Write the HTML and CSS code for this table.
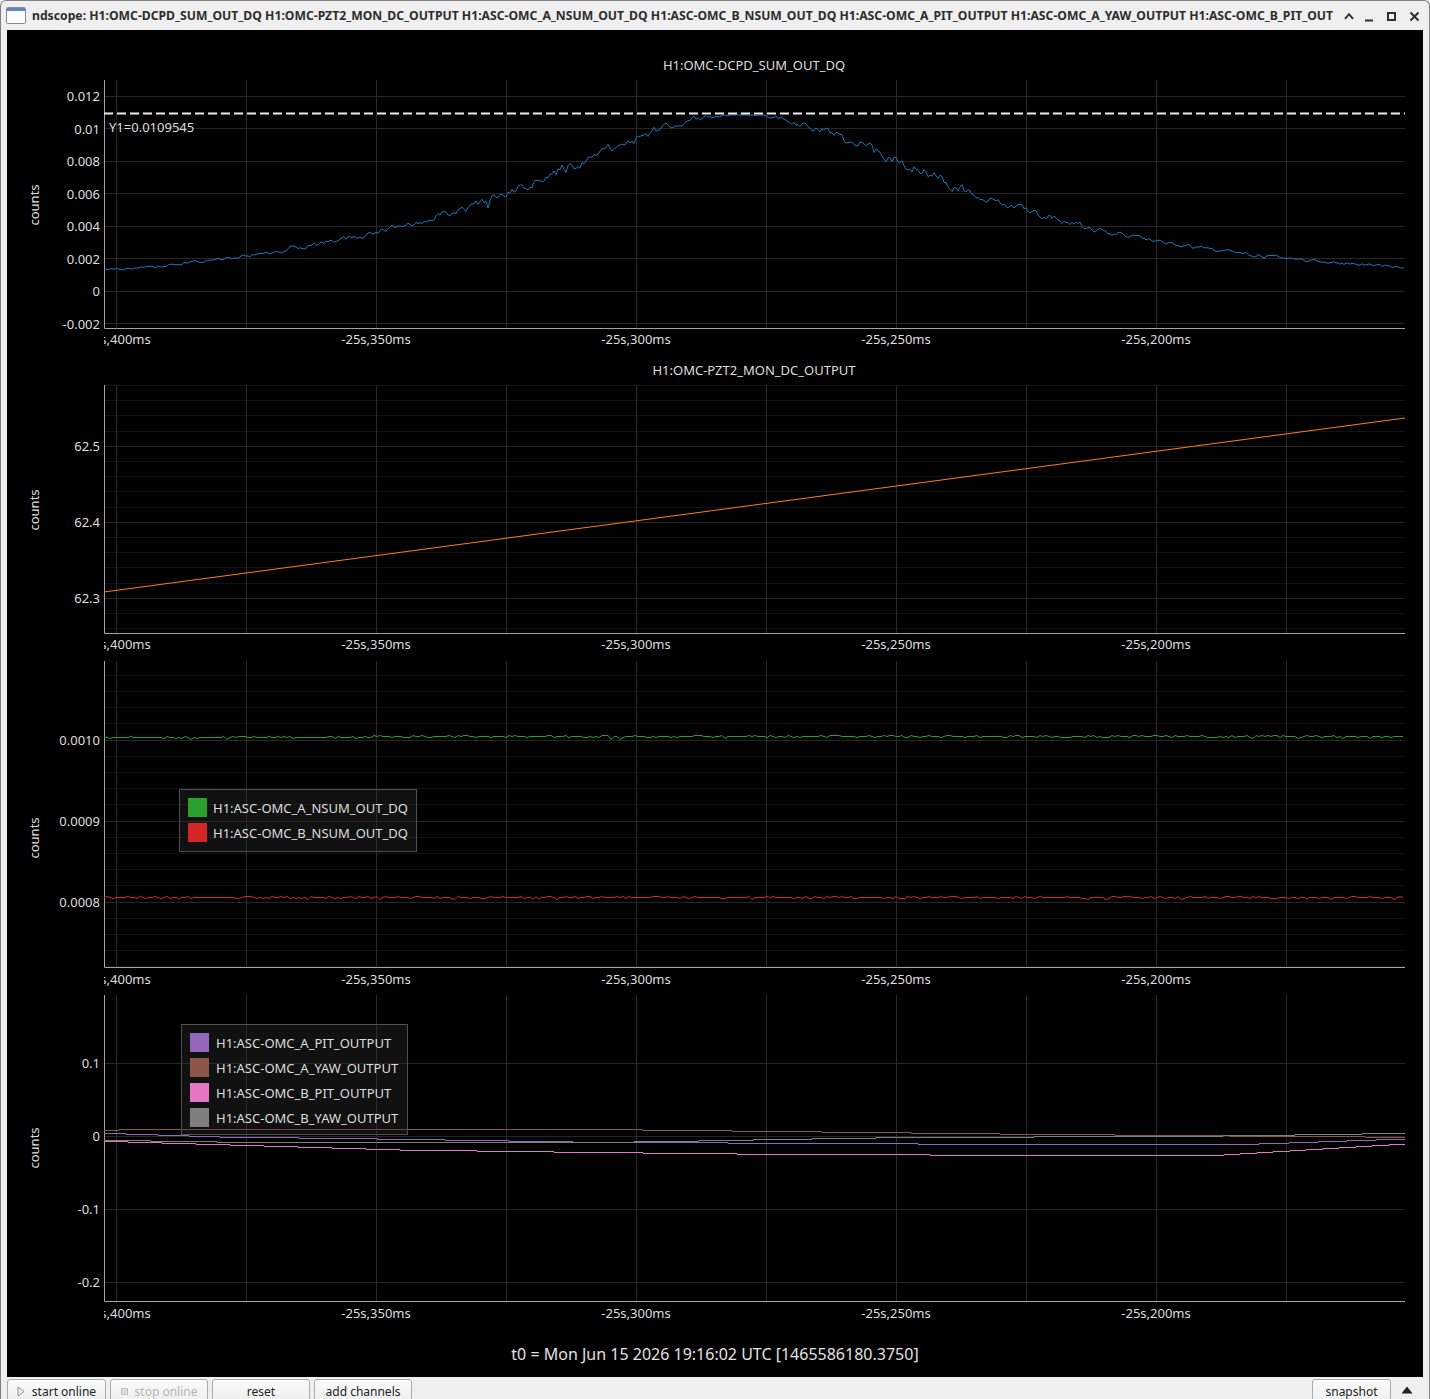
FILE: index.html
```html
<!DOCTYPE html>
<html lang="en">
<head>
<meta charset="utf-8">
<title>ndscope</title>
<link rel="stylesheet" href="styles.css">
</head>
<body>
<div class="window">
  <header class="titlebar">
    <svg class="app-icon" viewBox="0 0 20 17"><rect x="0.5" y="0.5" width="19" height="16" rx="1" class="ai-body"/><rect x="1" y="1" width="18" height="3" class="ai-bar"/></svg>
    <div class="title">ndscope: H1:OMC-DCPD_SUM_OUT_DQ H1:OMC-PZT2_MON_DC_OUTPUT H1:ASC-OMC_A_NSUM_OUT_DQ H1:ASC-OMC_B_NSUM_OUT_DQ H1:ASC-OMC_A_PIT_OUTPUT H1:ASC-OMC_A_YAW_OUTPUT H1:ASC-OMC_B_PIT_OUTPUT H1:ASC-OMC_B_YAW_OUTPUT</div>
    <div class="controls">
      <svg viewBox="0 0 22 22"><path d="M8 13.8 L12 9.2 L16 13.8" class="ctl"/></svg>
      <svg viewBox="0 0 22 22"><path d="M6 15.5 H14" class="ctl"/></svg>
      <svg viewBox="0 0 22 22"><rect x="7" y="8" width="7" height="7" class="ctl"/></svg>
      <svg viewBox="0 0 22 22"><path d="M7.5 7.5 L15.5 15.5 M15.5 7.5 L7.5 15.5" class="ctl"/></svg>
    </div>
  </header>

  <div class="frame">
    <main class="scope">
      <!-- plot 1 -->
      <svg class="plot p1" viewBox="7 30 1416 325">
        <defs><clipPath id="cx1"><rect x="104" y="0" width="1320" height="1400"/></clipPath></defs>
        <g id="g1"></g>
        <path class="axis" d="M104.5 80 V328.5 H1405"/>
        <g id="d1"></g>
        <line class="cursor" x1="104" x2="1405" y1="113.5" y2="113.5"/>
        <text class="ptitle" x="754" y="69.5">H1:OMC-DCPD_SUM_OUT_DQ</text>
        <text class="ylab" transform="translate(39 205) rotate(-90)">counts</text>
        <text class="ty" x="100" y="101">0.012</text>
        <text class="ty" x="100" y="133.5">0.01</text>
        <text class="ty" x="100" y="166">0.008</text>
        <text class="ty" x="100" y="198.5">0.006</text>
        <text class="ty" x="100" y="231">0.004</text>
        <text class="ty" x="100" y="263.5">0.002</text>
        <text class="ty" x="100" y="296">0</text>
        <text class="ty" x="100" y="328.5">-0.002</text>
        <text class="tx" x="116" y="344" clip-path="url(#cx1)">-25s,400ms</text>
        <text class="tx" x="376" y="344">-25s,350ms</text>
        <text class="tx" x="636" y="344">-25s,300ms</text>
        <text class="tx" x="896" y="344">-25s,250ms</text>
        <text class="tx" x="1156" y="344">-25s,200ms</text>
        <text class="cursor-label" x="109" y="132">Y1=0.0109545</text>
      </svg>

      <!-- plot 2 -->
      <svg class="plot p2" viewBox="7 355 1416 300">
        <defs><clipPath id="cx2"><rect x="104" y="0" width="1320" height="1400"/></clipPath></defs>
        <g id="g2"></g>
        <path class="axis" d="M104.5 385 V633.5 H1405"/>
        <g id="d2"></g>
        <text class="ptitle" x="754" y="374.5">H1:OMC-PZT2_MON_DC_OUTPUT</text>
        <text class="ylab" transform="translate(39 510) rotate(-90)">counts</text>
        <text class="ty" x="100" y="451">62.5</text>
        <text class="ty" x="100" y="527">62.4</text>
        <text class="ty" x="100" y="603">62.3</text>
        <text class="tx" x="116" y="649" clip-path="url(#cx2)">-25s,400ms</text>
        <text class="tx" x="376" y="649">-25s,350ms</text>
        <text class="tx" x="636" y="649">-25s,300ms</text>
        <text class="tx" x="896" y="649">-25s,250ms</text>
        <text class="tx" x="1156" y="649">-25s,200ms</text>
      </svg>

      <!-- plot 3 -->
      <svg class="plot p3" viewBox="7 655 1416 335">
        <defs><clipPath id="cx3"><rect x="104" y="0" width="1320" height="1400"/></clipPath></defs>
        <g id="g3"></g>
        <path class="axis" d="M104.5 661 V967.5 H1405"/>
        <g id="d3"></g>
        <text class="ylab" transform="translate(39 838) rotate(-90)">counts</text>
        <text class="ty" x="100" y="744.7">0.0010</text>
        <text class="ty" x="100" y="825.7">0.0009</text>
        <text class="ty" x="100" y="906.7">0.0008</text>
        <text class="tx" x="116" y="984" clip-path="url(#cx3)">-25s,400ms</text>
        <text class="tx" x="376" y="984">-25s,350ms</text>
        <text class="tx" x="636" y="984">-25s,300ms</text>
        <text class="tx" x="896" y="984">-25s,250ms</text>
        <text class="tx" x="1156" y="984">-25s,200ms</text>
        <g class="legend">
          <rect class="lg-box" x="179.5" y="789.5" width="237" height="62"/>
          <rect class="sw-green" x="188" y="798" width="19" height="19"/>
          <rect class="sw-red" x="188" y="823" width="19" height="19"/>
          <text class="lg-text" x="213" y="813.3">H1:ASC-OMC_A_NSUM_OUT_DQ</text>
          <text class="lg-text" x="213" y="838">H1:ASC-OMC_B_NSUM_OUT_DQ</text>
        </g>
      </svg>

      <!-- plot 4 -->
      <svg class="plot p4" viewBox="7 990 1416 340">
        <defs><clipPath id="cx4"><rect x="104" y="0" width="1320" height="1400"/></clipPath></defs>
        <g id="g4"></g>
        <path class="axis" d="M104.5 995 V1301.5 H1405"/>
        <g id="d4"></g>
        <text class="ylab" transform="translate(39 1148) rotate(-90)">counts</text>
        <text class="ty" x="100" y="1067.7">0.1</text>
        <text class="ty" x="100" y="1140.7">0</text>
        <text class="ty" x="100" y="1213.7">-0.1</text>
        <text class="ty" x="100" y="1286.7">-0.2</text>
        <text class="tx" x="116" y="1318" clip-path="url(#cx4)">-25s,400ms</text>
        <text class="tx" x="376" y="1318">-25s,350ms</text>
        <text class="tx" x="636" y="1318">-25s,300ms</text>
        <text class="tx" x="896" y="1318">-25s,250ms</text>
        <text class="tx" x="1156" y="1318">-25s,200ms</text>
        <g class="legend">
          <rect class="lg-box" x="181.5" y="1024.5" width="226" height="110"/>
          <rect class="sw-purple" x="190" y="1033" width="19" height="19"/>
          <rect class="sw-brown" x="190" y="1058" width="19" height="19"/>
          <rect class="sw-pink" x="190" y="1083" width="19" height="19"/>
          <rect class="sw-gray" x="190" y="1108" width="19" height="19"/>
          <text class="lg-text" x="216" y="1048">H1:ASC-OMC_A_PIT_OUTPUT</text>
          <text class="lg-text" x="216" y="1073">H1:ASC-OMC_A_YAW_OUTPUT</text>
          <text class="lg-text" x="216" y="1098">H1:ASC-OMC_B_PIT_OUTPUT</text>
          <text class="lg-text" x="216" y="1123">H1:ASC-OMC_B_YAW_OUTPUT</text>
        </g>
      </svg>

      <div class="t0">t0 = Mon Jun 15 2026 19:16:02 UTC [1465586180.3750]</div>
    </main>
  </div>

  <footer class="toolbar">
    <button class="btn btn-first"><svg class="ico-play" viewBox="0 0 8 11"><path d="M1 1 L7 5.5 L1 10 Z"/></svg><span>start online</span></button>
    <button class="btn btn-disabled"><svg class="ico-stop" viewBox="0 0 7 7"><rect x="0.5" y="0.5" width="6" height="6"/></svg><span>stop online</span></button>
    <button class="btn"><span>reset</span></button>
    <button class="btn"><span>add channels</span></button>
    <button class="btn btn-snap"><span>snapshot</span></button>
    <span class="arrow-up"><svg viewBox="0 0 12 8"><path d="M0.5 7.5 L6 0.5 L11.5 7.5 Z"/></svg></span>
  </footer>
</div>
<script src="app.js"></script>
</body>
</html>
```

FILE: styles.css
```css
* { box-sizing: border-box; }

html, body {
  margin: 0;
  padding: 0;
}

body {
  width: 1430px;
  height: 1399px;
  overflow: hidden;
  background: #efefef;
  font-family: "Noto Sans", "DejaVu Sans", sans-serif;
}

.window {
  width: 1430px;
  height: 1399px;
  border: 1px solid #808080;
  border-bottom: none;
  border-radius: 6px 6px 0 0;
  background: #efefef;
  display: flex;
  flex-direction: column;
  overflow: hidden;
}

/* ---------- title bar ---------- */
.titlebar {
  height: 29px;
  flex: none;
  display: flex;
  align-items: center;
  padding-left: 5px;
}

.app-icon {
  width: 20px;
  height: 17px;
  flex: none;
  margin-right: 6px;
}

.ai-body { fill: #fbfbfb; stroke: #8c8c8c; stroke-width: 1; }
.ai-bar { fill: #5b87c8; }

.title {
  flex: 1;
  min-width: 0;
  overflow: hidden;
  white-space: nowrap;
  font-size: 12.2px;
  font-weight: 700;
  color: #2d2d2d;
  line-height: 17px;
}

.controls {
  flex: none;
  display: flex;
  margin-left: 4px;
  padding-right: 4px;
}

.controls svg {
  width: 22px;
  height: 22px;
  display: block;
}

.ctl {
  fill: none;
  stroke: #2f2f2f;
  stroke-width: 2;
}

/* ---------- scope area ---------- */
.frame {
  flex: none;
  height: 1347px;
  padding: 0 6px;
}

.scope {
  height: 1347px;
  background: #000;
  display: flex;
  flex-direction: column;
}

.plot {
  display: block;
  width: 1416px;
  flex: none;
}

.p1 { height: 325px; }
.p2 { height: 300px; }
.p3 { height: 335px; }
.p4 { height: 340px; }

.plot text {
  font-family: "Noto Sans", "DejaVu Sans", sans-serif;
  font-size: 13px;
  fill: #dedede;
}

.plot .ty { text-anchor: end; }
.plot .tx,
.plot .ptitle,
.plot .ylab { text-anchor: middle; }

.g-major { stroke: #262626; stroke-width: 1; }
.g-minor { stroke: #131313; stroke-width: 1; }
.g-vert { stroke: #2b2b2b; stroke-width: 1; }

.axis {
  fill: none;
  stroke: #a3a3a3;
  stroke-width: 1;
}

.cursor {
  stroke: #ececec;
  stroke-width: 2;
  stroke-dasharray: 9 4;
}

.trace { fill: none; stroke-width: 1; }
.c-blue { stroke: #1f77b4; }
.c-orange { stroke: #ff7f0e; }
.c-green { stroke: #2ca02c; }
.c-red { stroke: #d62728; }
.c-purple { stroke: #9467bd; }
.c-brown { stroke: #8c564b; }
.c-pink { stroke: #e377c2; }
.c-gray { stroke: #7f7f7f; }

.lg-box {
  fill: rgba(48, 48, 48, 0.36);
  stroke: #4f4f4f;
  stroke-width: 1;
}

.sw-green { fill: #2ca02c; }
.sw-red { fill: #d62728; }
.sw-purple { fill: #9467bd; }
.sw-brown { fill: #8c564b; }
.sw-pink { fill: #e377c2; }
.sw-gray { fill: #7f7f7f; }

.t0 {
  height: 47px;
  flex: none;
  display: flex;
  align-items: center;
  justify-content: center;
  color: #e2e2e2;
  font-size: 16px;
}

/* ---------- toolbar ---------- */
.toolbar {
  height: 22px;
  flex: none;
  display: flex;
  align-items: flex-start;
  gap: 4px;
  padding: 2px 11px 0 6px;
  overflow: hidden;
}

.btn {
  flex: none;
  width: 98px;
  height: 26px;
  margin: 0;
  padding: 3px 0 0;
  border: 1px solid #ababab;
  border-radius: 3px;
  background: linear-gradient(#fbfbfb, #ececec);
  font-family: "Noto Sans", "DejaVu Sans", sans-serif;
  font-size: 12px;
  line-height: 17px;
  color: #232323;
  display: flex;
  justify-content: center;
  align-items: flex-start;
  gap: 7px;
}

.btn-first { width: 99px; }

.btn-disabled { color: #b4b4b4; }

.btn-snap {
  width: 79px;
  margin-left: auto;
}

.ico-play {
  width: 8px;
  height: 11px;
  margin-top: 3px;
}

.ico-play path {
  fill: none;
  stroke: #8d8d8d;
  stroke-width: 1;
}

.ico-stop {
  width: 7px;
  height: 7px;
  margin-top: 5px;
}

.ico-stop rect {
  fill: #dcdcdc;
  stroke: #c4c4c4;
  stroke-width: 1;
}

.arrow-up {
  flex: none;
  width: 22px;
  margin-left: 1px;
  padding-top: 7px;
  display: flex;
  justify-content: center;
}

.arrow-up svg {
  width: 12px;
  height: 8px;
  display: block;
}

.arrow-up path { fill: #222; }
```

FILE: app.js
```js
(function () {
  var NS = 'http://www.w3.org/2000/svg';
  var XS = [116, 246, 376, 506, 636, 766, 896, 1026, 1156, 1286];
  var L = 104, R = 1405;
  var seed = 20260615;

  function rnd() {
    seed = (seed * 1664525 + 1013904223) >>> 0;
    return seed / 4294967296;
  }
  function $(id) { return document.getElementById(id); }
  function add(parent, tag, attrs) {
    var e = document.createElementNS(NS, tag);
    for (var k in attrs) e.setAttribute(k, attrs[k]);
    parent.appendChild(e);
    return e;
  }
  function crisp(v) { return Math.floor(v) + 0.5; }
  function hline(g, y, cls) {
    add(g, 'line', { x1: L, x2: R, y1: crisp(y), y2: crisp(y), 'class': cls });
  }
  function grid(id, top, bottom, majors, minors) {
    var g = $(id);
    minors.forEach(function (y) { hline(g, y, 'g-minor'); });
    majors.forEach(function (y) { hline(g, y, 'g-major'); });
    XS.forEach(function (x) {
      add(g, 'line', { x1: x + 0.5, x2: x + 0.5, y1: top, y2: bottom, 'class': 'g-vert' });
    });
  }
  function minorList(center, step, kmin, kmax) {
    var a = [];
    for (var k = kmin; k <= kmax; k++) if (k % 5 !== 0) a.push(center - k * step);
    return a;
  }
  function poly(id, cls, pts) {
    var d = '';
    for (var i = 0; i < pts.length; i++) {
      d += (i ? 'L' : 'M') + pts[i][0].toFixed(1) + ' ' + pts[i][1].toFixed(2);
    }
    add($(id), 'path', { d: d, 'class': 'trace ' + cls });
  }
  function interp(keys, x) {
    for (var i = 1; i < keys.length; i++) {
      if (x <= keys[i][0]) {
        var a = keys[i - 1], b = keys[i];
        var t = (x - a[0]) / (b[0] - a[0]);
        return a[1] + t * (b[1] - a[1]);
      }
    }
    return keys[keys.length - 1][1];
  }
  function stairs(id, cls, keys) {
    var d = '', prev = null;
    for (var x = L; x <= R; x++) {
      var y = crisp(interp(keys, x));
      if (prev === null) d = 'M' + x + ' ' + y;
      else if (y !== prev) d += 'H' + x + 'V' + y;
      prev = y;
    }
    d += 'H' + R;
    add($(id), 'path', { d: d, 'class': 'trace ' + cls });
  }

  /* ---- grids ---- */
  var p1Majors = [];
  for (var v = -0.002; v <= 0.0121; v += 0.002) p1Majors.push(291.4 - v * 16250);
  grid('g1', 80, 328, p1Majors, []);
  grid('g2', 385, 633, [598.3, 522.3, 446.3], minorList(522.3, 15.2, -7, 9));
  grid('g3', 661, 967, [902, 821, 740], minorList(821, 16.2, -9, 9));
  grid('g4', 995, 1301, [1063, 1136, 1209, 1282], []);

  /* ---- plot 1: DCPD sum (Lorentzian resonance with noise) ---- */
  var pts = [], e = 0;
  for (var x = L; x <= R; x += 2) {
    var u = (x - 740) / 262;
    var f = 1 / (1 + u * u);
    var s = Math.abs(2 * u / ((1 + u * u) * (1 + u * u)));
    var base = 0.0109 * f - 0.0003 * Math.max(0, (500 - x) / 400);
    var kick = rnd() < 0.03 ? (rnd() - 0.3) * 14 * s : 0;
    e = 0.55 * e + (rnd() - 0.5) * (1.0 + 12 * s) + kick;
    var y = 291.3 - base * 16250 + e;
    if (y < 114.8) y = 114.8 + (114.8 - y) * 0.4;
    pts.push([x, y]);
  }
  poly('d1', 'c-blue', pts);

  /* ---- plot 2: PZT ramp ---- */
  poly('d2', 'c-orange', [[L, 592], [R, 418]]);

  /* ---- plot 3: NSUM ---- */
  function flat(baseL, baseR) {
    var a = [];
    for (var x = L; x <= R; x += 3) {
      var n = rnd(), off = 0;
      if (n < 0.035) off = 2.2;
      else if (n < 0.22) off = 1;
      else if (n > 0.82) off = -1;
      var y = baseL + (baseR - baseL) * (x - L) / (R - L) + off;
      a.push([x, Math.floor(y) + 0.5]);
    }
    return a;
  }
  poly('d3', 'c-green', flat(737.2, 736.2));
  poly('d3', 'c-red', flat(897.6, 897.4));

  /* ---- plot 4: ASC WFS ---- */
  stairs('d4', 'c-purple', [[104, 1133.3], [220, 1137], [400, 1139.3], [573, 1142], [836, 1143.7], [1000, 1144.3], [1250, 1144.3], [1405, 1139]]);
  stairs('d4', 'c-brown', [[104, 1130.3], [146, 1129.4], [580, 1129.3], [1000, 1134], [1230, 1136], [1405, 1137.3]]);
  stairs('d4', 'c-pink', [[104, 1141.3], [400, 1150], [576, 1152.3], [765, 1154.3], [1000, 1155.3], [1223, 1155], [1405, 1144]]);
  stairs('d4', 'c-gray', [[104, 1140.3], [250, 1142.5], [573, 1142.7], [660, 1141.7], [780, 1139.5], [920, 1137.3], [1033, 1137], [1222, 1136], [1330, 1134.5], [1405, 1133.3]]);
})();
```
